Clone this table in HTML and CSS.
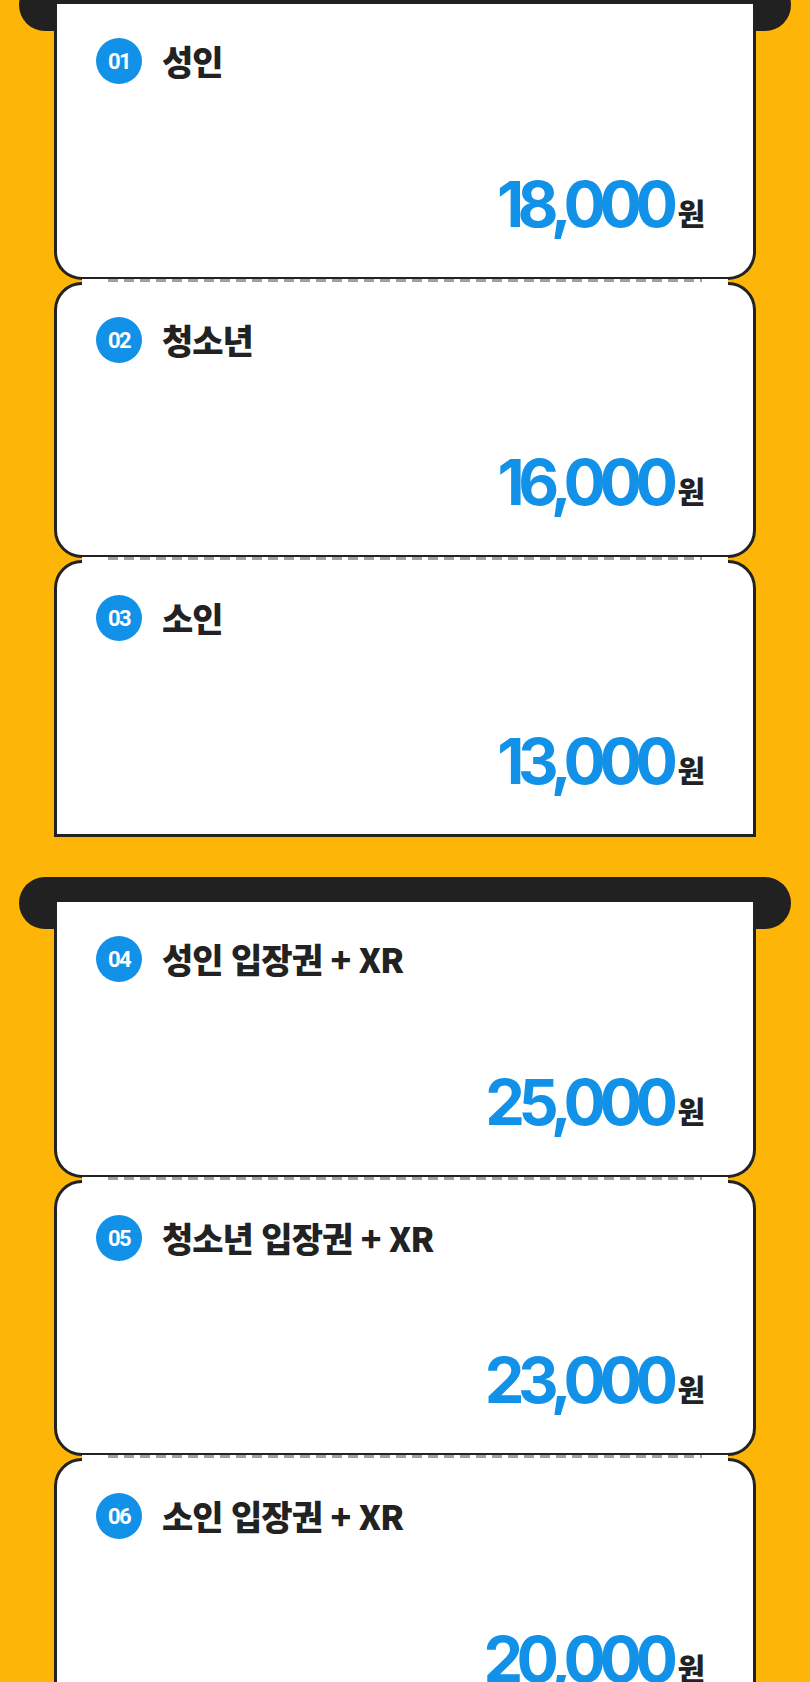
FILE: index.html
```html
<!DOCTYPE html>
<html lang="ko">
<head>
    <meta charset="UTF-8">
    <meta name="viewport" content="width=device-width, initial-scale=1.0">
    <title>요금 안내</title>
<link rel="stylesheet" href="styles.css">
</head>
<body>
    <div class="page">
        <section class="ticket">
            <div class="slot"></div>
            <div class="card">
                <div class="seg seg_first">
                    <div class="head"><span class="num">01</span><h2>성인</h2></div>
                    <p class="price"><strong>18,000</strong><span>원</span></p>
                </div>
                <div class="cut"></div>
                <div class="seg seg_mid">
                    <div class="head"><span class="num">02</span><h2>청소년</h2></div>
                    <p class="price"><strong>16,000</strong><span>원</span></p>
                </div>
                <div class="cut"></div>
                <div class="seg seg_last">
                    <div class="head"><span class="num">03</span><h2>소인</h2></div>
                    <p class="price"><strong>13,000</strong><span>원</span></p>
                </div>
            </div>
        </section>

        <section class="ticket">
            <div class="slot"></div>
            <div class="card">
                <div class="seg seg_first">
                    <div class="head"><span class="num">04</span><h2>성인 입장권 + XR</h2></div>
                    <p class="price"><strong>25,000</strong><span>원</span></p>
                </div>
                <div class="cut"></div>
                <div class="seg seg_mid">
                    <div class="head"><span class="num">05</span><h2>청소년 입장권 + XR</h2></div>
                    <p class="price"><strong>23,000</strong><span>원</span></p>
                </div>
                <div class="cut"></div>
                <div class="seg seg_last">
                    <div class="head"><span class="num">06</span><h2>소인 입장권 + XR</h2></div>
                    <p class="price"><strong>20,000</strong><span>원</span></p>
                </div>
            </div>
        </section>
    </div>
</body>
</html>
```

FILE: styles.css
```css
*{
    margin:0;
    padding:0;
    box-sizing: border-box;
}
body{
    background: #fdb507;
    font-family: "Noto Sans CJK KR", "Noto Sans", sans-serif;
    color: #222;
}
.page{
    width: 810px;
    margin: 0 auto;
    overflow: hidden;
}
.ticket{
    margin-top: 40px;
}
.ticket:first-child{
    margin-top: -21px;
}
/* 티켓이 나오는 검은 입구 */
.slot{
    width: 772px;
    height: 52px;
    margin: 0 auto;
    background: #212121;
    border-radius: 26px;
}
.card{
    position: relative;
    width: 702px;
    margin: -27px auto 0;
}
.seg{
    display: flex;
    flex-direction: column;
    justify-content: space-between;
    background: #fff;
    border: 3px solid #222;
    padding: 32px 49px 41px 39px;
}
.seg_first{
    height: 276px;
    border-top: 0;
    padding-top: 34px;
    border-radius: 0 0 28px 28px;
}
.seg_mid{
    height: 276px;
    border-radius: 28px;
}
.seg_last{
    height: 277px;
    border-radius: 28px 28px 0 0;
}
/* 점선 절취선 */
.cut{
    position: relative;
    z-index: 1;
    height: 6px;
    margin: -3px 28px;
    padding: 0 26px;
    background: #fff;
}
.cut::before{
    content: '';
    display: block;
    height: 3px;
    margin-top: 2px;
    background: repeating-linear-gradient(90deg, #9f9f9f 0 10px, transparent 10px 16px);
}
.head{
    display: flex;
    align-items: center;
    gap: 20px;
}
.num{
    width: 46px;
    height: 46px;
    border-radius: 50%;
    background: #1192e8;
    color: #fff;
    font-family: Roboto, sans-serif;
    font-weight: 700;
    font-size: 22px;
    letter-spacing: -1.5px;
    display: flex;
    align-items: center;
    justify-content: center;
}
.head h2{
    font-size: 34px;
    font-weight: 900;
    letter-spacing: -1px;
    line-height: 1;
}
.price{
    display: flex;
    justify-content: flex-end;
    align-items: baseline;
    line-height: 1;
}
.price strong{
    font-family: Inter, sans-serif;
    font-size: 63px;
    font-weight: 700;
    letter-spacing: -6.5px;
    color: #1192e8;
    margin-right: 6px;
}
.price span{
    position: relative;
    top: -2px;
    font-size: 30px;
    font-weight: 900;
    letter-spacing: -1px;
}
```
